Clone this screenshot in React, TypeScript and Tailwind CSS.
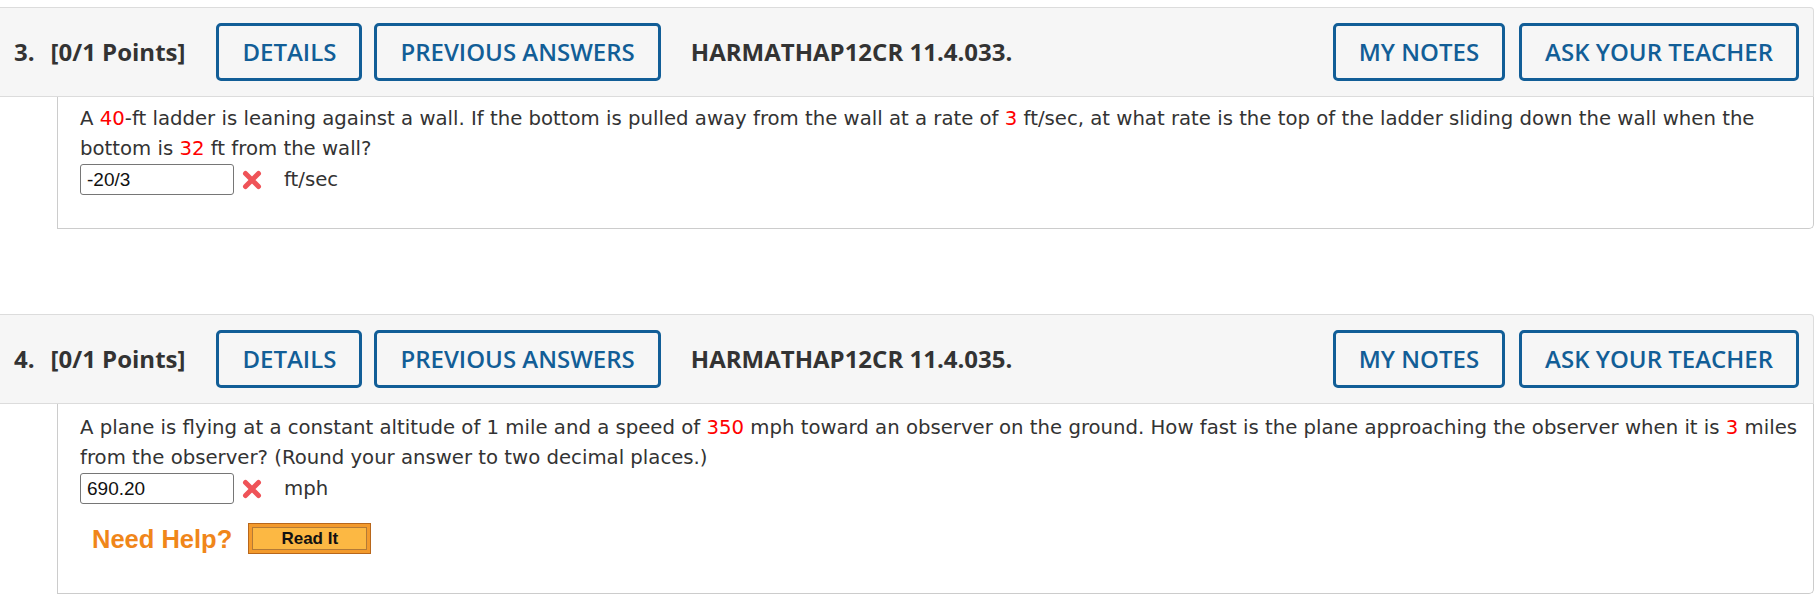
import React from "react";

function Btn({ children }: { children: React.ReactNode }) {
  return (
    <div className="h-[58px] flex items-center px-[23px] border-[3px] border-[#125e97] rounded-[5px] text-[24px] font-semibold text-[#125e97] whitespace-nowrap" style={{ fontFamily: "'Open Sans', sans-serif" }}>
      {children}
    </div>
  );
}

function Header({ num, code }: { num: string; code: string }) {
  return (
    <div className="h-[90px] flex items-center bg-[#f6f6f6] border-y border-r border-[#dcdcdc] rounded-tr-[4px] pl-[14px] pr-[14px]" style={{ fontFamily: "'Open Sans', sans-serif" }}>
      <div className="font-bold text-[24px] text-[#333] whitespace-nowrap">
        <span>{num}.</span>
        <span className="ml-[16px]">[0/1 Points]</span>
      </div>
      <div className="ml-[31px] flex gap-[12px]">
        <Btn>DETAILS</Btn>
        <Btn>PREVIOUS ANSWERS</Btn>
      </div>
      <div className="ml-[30px] font-bold text-[24px] text-[#333] whitespace-nowrap">{code}</div>
      <div className="ml-auto flex gap-[14px]">
        <Btn>MY NOTES</Btn>
        <Btn>ASK YOUR TEACHER</Btn>
      </div>
    </div>
  );
}

function XIcon() {
  return (
    <svg width="20" height="20" viewBox="0 0 20 20" className="shrink-0">
      <path d="M3.5 3.5 L16.5 16.5 M16.5 3.5 L3.5 16.5" stroke="#ef5358" strokeWidth="5" strokeLinecap="round" />
    </svg>
  );
}

function AnswerRow({ value, unit }: { value: string; unit: string }) {
  return (
    <div className="flex items-center h-[31px]">
      <div className="w-[154px] h-[31px] border border-[#767676] rounded-[3px] pl-[6px] flex items-center text-[19px] text-[#111]" style={{ fontFamily: "'Liberation Sans', Arial, sans-serif" }}>
        {value}
      </div>
      <div className="ml-[8px]"><XIcon /></div>
      <div className="ml-[22px] text-[#333]">{unit}</div>
    </div>
  );
}

const R = ({ children }: { children: React.ReactNode }) => <span className="text-[#ff0000]">{children}</span>;

export default function App() {
  return (
    <div className="w-[1814px] pt-[7px] bg-white">
      <Header num="3" code="HARMATHAP12CR 11.4.033." />
      <div className="ml-[57px] border-x border-b border-[#cccccc] rounded-br-[5px] pl-[22px] pr-[6px] pt-[7px] pb-[33px] text-[19.7px] leading-[30px] text-[#333]" style={{ fontFamily: "'DejaVu Sans', Verdana, sans-serif" }}>
        <div>
          A <R>40</R>-ft ladder is leaning against a wall. If the bottom is pulled away from the wall at a rate of <R>3</R> ft/sec, at what rate is the top of the ladder sliding down the wall when the bottom is <R>32</R> ft from the wall?
        </div>
        <AnswerRow value="-20/3" unit="ft/sec" />
      </div>

      <div className="h-[85px]" />

      <Header num="4" code="HARMATHAP12CR 11.4.035." />
      <div className="ml-[57px] border-x border-b border-[#cccccc] rounded-br-[5px] pl-[22px] pr-[6px] pt-[9px] pb-[39px] text-[19.7px] leading-[30px] text-[#333]" style={{ fontFamily: "'DejaVu Sans', Verdana, sans-serif" }}>
        <div>
          A plane is flying at a constant altitude of 1 mile and a speed of <R>350</R> mph toward an observer on the ground. How fast is the plane approaching the observer when it is <R>3</R> miles from the observer? (Round your answer to two decimal places.)
        </div>
        <AnswerRow value="690.20" unit="mph" />
        <div className="mt-[19px] flex items-center pl-[12px]">
          <span className="text-[25.5px] font-bold text-[#f0861a] leading-[30px]" style={{ fontFamily: "'Liberation Sans', Arial, sans-serif" }}>Need Help?</span>
          <div className="ml-[16px] w-[123px] h-[31px] bg-[#f39a2c] border border-[#b8671c] p-[3px]">
            <div className="w-full h-full bg-[#fcb843] border border-[#b47a36] flex items-center justify-center text-[17px] font-bold text-[#111] leading-none" style={{ fontFamily: "'Liberation Sans', Arial, sans-serif" }}>
              Read It
            </div>
          </div>
        </div>
      </div>
    </div>
  );
}
